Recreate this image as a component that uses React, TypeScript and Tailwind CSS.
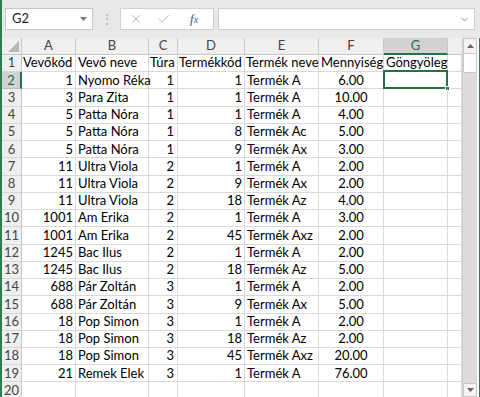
import React from 'react';
import { X, Check, ChevronDown } from 'lucide-react';

type Row = [number, string, number, number, string, string];

const rows: Row[] = [
  [1, 'Nyomo Réka', 1, 1, 'Termék A', '6.00'],
  [3, 'Para Zita', 1, 1, 'Termék A', '10.00'],
  [5, 'Patta Nóra', 1, 1, 'Termék A', '4.00'],
  [5, 'Patta Nóra', 1, 8, 'Termék Ac', '5.00'],
  [5, 'Patta Nóra', 1, 9, 'Termék Ax', '3.00'],
  [11, 'Ultra Viola', 2, 1, 'Termék A', '2.00'],
  [11, 'Ultra Viola', 2, 9, 'Termék Ax', '2.00'],
  [11, 'Ultra Viola', 2, 18, 'Termék Az', '4.00'],
  [1001, 'Am Erika', 2, 1, 'Termék A', '3.00'],
  [1001, 'Am Erika', 2, 45, 'Termék Axz', '2.00'],
  [1245, 'Bac Ilus', 2, 1, 'Termék A', '2.00'],
  [1245, 'Bac Ilus', 2, 18, 'Termék Az', '5.00'],
  [688, 'Pár Zoltán', 3, 1, 'Termék A', '2.00'],
  [688, 'Pár Zoltán', 3, 9, 'Termék Ax', '5.00'],
  [18, 'Pop Simon', 3, 1, 'Termék A', '2.00'],
  [18, 'Pop Simon', 3, 18, 'Termék Az', '2.00'],
  [18, 'Pop Simon', 3, 45, 'Termék Axz', '20.00'],
  [21, 'Remek Elek', 3, 1, 'Termék A', '76.00'],
];

const cols = [
  { name: 'A', w: 'w-[54px]' },
  { name: 'B', w: 'w-[73px]' },
  { name: 'C', w: 'w-[29px]' },
  { name: 'D', w: 'w-[67px]' },
  { name: 'E', w: 'w-[74px]' },
  { name: 'F', w: 'w-[65px]' },
  { name: 'G', w: 'w-[64px]' },
];

const cell = 'shrink-0 h-full border-r border-b border-[#d9d9d9] flex items-center whitespace-nowrap';

const RowHead: React.FC<{ n: number; active?: boolean }> = ({ n, active }) => (
  <div
    className={`w-[20px] shrink-0 h-full flex items-center justify-center text-[13px] border-b ${
      active
        ? 'bg-[#d2d2d2] text-[#1f6b40] border-r-2 border-r-[#217346] border-b-[#bdbdbd]'
        : 'bg-[#efefef] text-[#444] border-r border-r-[#c6c6c6] border-b-[#d6d6d6]'
    }`}
  >
    {n}
  </div>
);

const DataRow: React.FC<{ n: number; r?: Row }> = ({ n, r }) => (
  <div className="flex h-[17.24px]">
    <RowHead n={n} active={n === 2} />
    <div className={`${cell} ${cols[0].w} justify-end pr-[2px]`}>{r ? r[0] : ''}</div>
    <div className={`${cell} ${cols[1].w} pl-[2px]`}>{r ? r[1] : ''}</div>
    <div className={`${cell} ${cols[2].w} justify-end pr-[3px]`}>{r ? r[2] : ''}</div>
    <div className={`${cell} ${cols[3].w} justify-end pr-[2px]`}>{r ? r[3] : ''}</div>
    <div className={`${cell} ${cols[4].w} pl-[2px]`}>{r ? r[4] : ''}</div>
    <div className={`${cell} ${cols[5].w} justify-center`}>{r ? r[5] : ''}</div>
    <div className={`${cell} ${cols[6].w} relative`}>
      {n === 2 && (
        <div className="absolute -left-[1px] -top-[2px] right-[-1px] bottom-[-1px] border-2 border-[#217346]">
          <div className="absolute -right-[4px] -bottom-[4px] w-[5px] h-[5px] bg-[#217346] border border-white" />
        </div>
      )}
    </div>
    <div className={`${cell} flex-1`} />
  </div>
);

export default function App() {
  return (
    <div
      className="w-[480px] h-[397px] overflow-hidden bg-[#e8e8e8] border-l-2 border-[#2f7d4e] flex flex-col text-black"
      style={{ fontFamily: 'Lato, "Open Sans", sans-serif' }}
    >
      {/* formula bar */}
      <div className="h-[38px] shrink-0 flex items-start pt-[8px] pl-[3px] pr-[5px]">
        <div className="w-[88px] h-[22px] bg-white border border-[#c6c6c6] flex items-center justify-between pl-[6px] pr-[5px] text-[13px] text-[#222]">
          <span>G2</span>
          <svg width="7" height="4" viewBox="0 0 7 4">
            <polygon points="0,0 7,0 3.5,4" fill="#777" />
          </svg>
        </div>
        <div className="w-[27px] h-[22px] flex items-center justify-center">
          <span className="text-[#a8a8a8] text-[12px] leading-none tracking-tight">⋮</span>
        </div>
        <div className="w-[94px] h-[22px] bg-white border border-[#d0d0d0] flex items-center pl-[8px] gap-[14px]">
          <X size={14} strokeWidth={1.5} color="#b0b0b0" />
          <Check size={14} strokeWidth={1.5} color="#b0b0b0" />
          <span className="text-[13px] italic text-[#555] ml-[5px]" style={{ fontFamily: '"Liberation Serif", serif' }}>
            f<span className="text-[10px]">x</span>
          </span>
        </div>
        <div className="flex-1 h-[22px] ml-[4px] bg-white border border-[#d0d0d0] flex items-center justify-end pr-[4px]">
          <ChevronDown size={11} strokeWidth={2} color="#777" />
        </div>
      </div>

      {/* sheet */}
      <div className="flex-1 flex min-h-0 border-r border-[#2f7d4e]">
        <div className="flex-1 flex flex-col bg-white text-[13px] min-w-0">
          {/* column headers */}
          <div className="flex h-[17px] shrink-0 bg-[#efefef] text-[13px] text-[#444]">
            <div className="w-[20px] shrink-0 h-full border-r border-b border-[#c6c6c6] relative">
              <svg className="absolute right-[2px] bottom-[2px]" width="11" height="11" viewBox="0 0 11 11">
                <polygon points="11,0 11,11 0,11" fill="#b8b8b8" />
              </svg>
            </div>
            {cols.map((c) =>
              c.name === 'G' ? (
                <div
                  key={c.name}
                  className={`${c.w} shrink-0 h-full flex items-center justify-center bg-[#d2d2d2] text-[#2a6a44] border-r border-[#c6c6c6] border-b-2 border-b-[#217346]`}
                >
                  {c.name}
                </div>
              ) : (
                <div
                  key={c.name}
                  className={`${c.w} shrink-0 h-full flex items-center justify-center border-r border-b border-[#c6c6c6]`}
                >
                  {c.name}
                </div>
              )
            )}
            <div className="flex-1 h-full border-b border-[#c6c6c6]" />
          </div>

          {/* header row 1 */}
          <div className="flex h-[17.24px] shrink-0">
            <RowHead n={1} />
            <div className={`${cell} ${cols[0].w} pl-[1px]`}>Vevőkód</div>
            <div className={`${cell} ${cols[1].w} pl-[2px]`}>Vevő neve</div>
            <div className={`${cell} ${cols[2].w} pl-[1px]`}>Túra</div>
            <div className={`${cell} ${cols[3].w} pl-[1px]`}>Termékkód</div>
            <div className={`${cell} ${cols[4].w} pl-[1px]`}>Termék neve</div>
            <div className={`${cell} ${cols[5].w} pl-[2px]`}>Mennyiség</div>
            <div className={`${cell} ${cols[6].w} pl-[2px]`}>Göngyöleg</div>
            <div className={`${cell} flex-1`} />
          </div>

          {rows.map((r, i) => (
            <DataRow key={i} n={i + 2} r={r} />
          ))}
          <DataRow n={20} />
        </div>

        {/* vertical scrollbar */}
        <div className="w-[15px] shrink-0 bg-[#dcdcdc] flex flex-col justify-between border-l border-[#d0d0d0]">
          <div>
            <div className="h-[16px] bg-[#f4f4f4] border border-[#c8c8c8] flex items-center justify-center">
              <svg width="7" height="4" viewBox="0 0 7 4">
                <polygon points="3.5,0 7,4 0,4" fill="#666" />
              </svg>
            </div>
            <div className="h-[19px] bg-white border border-[#c8c8c8] border-t-0" />
          </div>
          <div className="h-[14px] bg-[#f4f4f4] border border-[#c8c8c8] flex items-center justify-center">
            <svg width="7" height="4" viewBox="0 0 7 4">
              <polygon points="0,0 7,0 3.5,4" fill="#666" />
            </svg>
          </div>
        </div>
        <div className="w-[2px] shrink-0 bg-white" />
      </div>
    </div>
  );
}
